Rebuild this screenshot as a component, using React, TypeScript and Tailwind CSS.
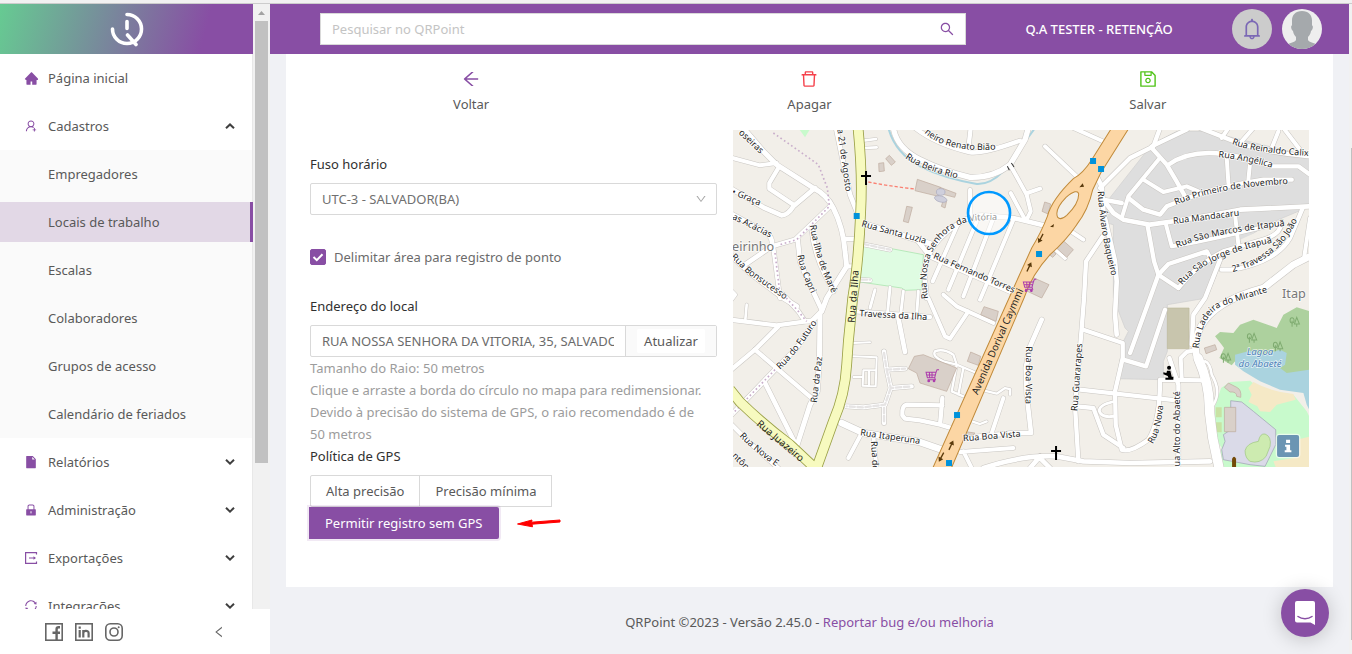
import React, { useState } from "react";
import {
  AiFillFile,
  AiFillHome,
  AiFillLock,
  AiOutlineArrowLeft,
  AiOutlineBell,
  AiOutlineDelete,
  AiOutlineDown,
  AiOutlineLeft,
  AiOutlineSave,
  AiOutlineSearch,
  AiOutlineSync,
  AiOutlineUserAdd,
} from "react-icons/ai";

/* ---------- Map data: three units of the drawing are one pixel ---------- */

type Road = [width: number, d: string];

const roads: Road[] = [
  [15, "M40,0 L100,70 L140,110 L250,180 Q290,200 310,240 Q340,300 345,370 L350,415 L290,510 L275,550 L245,580"],
  [12, "M0,88 L90,112 L140,105"],
  [13, "M145,120 L118,165 L118,182 L190,230"],
  [14, "M0,180 L100,238 L155,262 Q175,260 190,235 L255,180"],
  [14, "M0,255 L110,315 Q130,330 125,355 L45,410"],
  [13, "M125,355 L195,335 L300,235"],
  [13, "M130,360 L150,510"],
  [15, "M0,380 L60,435 L160,510 L200,535"],
  [14, "M203,335 L210,400 L230,450 L275,545"],
  [14, "M245,300 Q250,370 285,440 L310,490"],
  [14, "M318,0 L345,130 L360,200 L380,250"],
  [8, "M400,38 L438,33 M400,60 L440,58"],
  [13, "M345,333 L372,333 M350,415 L368,415"],
  [16, "M395,285 L600,347"],
  [12, "M395,348 L480,365 M390,455 L420,457"],
  [13, "M0,575 L140,592 L245,578"],
  [8, "M50,530 L46,575"],
  [13, "M145,595 L75,665 L0,728"],
  [13, "M75,665 L245,810"],
  [13, "M160,500 L205,550 L225,580 L245,580"],
  [14, "M250,585 L200,660 L135,725 L0,865"],
  [14, "M105,765 L200,955"],
  [15, "M270,560 L268,700 L262,790 L240,830 L200,955"],
  [13, "M0,885 L60,945 L150,1025"],
  [12, "M0,485 L15,500 L0,520"],
  [13, "M378,550 L600,567"],
  [9, "M435,485 L420,540 M480,478 L472,560 M520,490 L512,560 M565,490 L560,560"],
  [14, "M505,570 L525,672"],
  [6, "M370,645 L420,643 M370,685 L440,688 L437,775 L398,773 L400,727 L437,727 M370,747 L398,747 M417,727 V773"],
  [13, "M462,670 L470,725 L525,722 M470,725 L482,780 L545,775 M482,780 L465,830 L400,838 L350,835 M462,835 L462,885"],
  [13, "M637,832 L530,830 Q515,832 517,862 L525,872 L570,877 L630,890 L680,905 M637,810 L630,890"],
  [20, "M335,885 L400,915 L570,942 L650,970"],
  [12, "M395,915 L355,990 M430,925 L440,1025"],
  [13, "M555,0 Q620,50 720,73 Q760,78 870,38 M715,60 L722,0"],
  [16, "M490,0 Q500,60 570,95 Q640,130 720,148 Q790,150 840,110 L885,35 L895,0"],
  [12, "M840,110 L890,200 L902,250 L890,275 M892,195 L930,182 M842,195 L885,275 M720,185 V260"],
  [14, "M590,510 L582,430 Q590,350 680,290 Q720,262 760,262 L850,270 L940,292"],
  [12, "M985,285 L1060,335"],
  [12, "M685,285 L608,460 M740,280 L655,485 M790,270 L700,505 M850,275 L750,515"],
  [14, "M565,340 L600,385 L850,495"],
  [12, "M945,55 L1045,150 M1030,0 L1130,45 M955,345 L1005,390"],
  [14, "M1100,145 L1115,175 L1120,250 L1155,400 L1160,460 L1155,560 L1160,620"],
  [13, "M1118,325 L1068,400 L1062,510 L1055,600 L1035,835 L1045,1000"],
  [13, "M1110,180 L1200,90 L1270,55 L1290,0 M1120,215 L1175,225"],
  [13, "M1410,0 L1500,35 Q1600,75 1740,85"],
  [12, "M1475,30 L1495,0 M1535,40 L1570,0 M1625,60 L1645,10 M1660,0 L1710,65"],
  [13, "M1265,55 L1370,5 M1265,60 L1310,110 Q1340,160 1365,205"],
  [13, "M1315,110 Q1380,65 1480,78 Q1580,95 1625,115 L1705,115 L1740,140"],
  [12, "M1490,90 L1495,165 M1560,105 L1555,155"],
  [13, "M1685,155 L1600,155 Q1500,170 1400,200 L1310,235 L1290,260 L1240,245 L1195,210"],
  [12, "M1285,95 L1195,205 L1175,270 M1240,155 L1300,192 L1370,175 L1405,190"],
  [14, "M1120,215 L1150,255 L1180,275 L1260,290 Q1400,270 1530,245 L1740,235"],
  [12, "M1308,290 L1325,355 Q1400,345 1650,285 M1515,260 L1525,350"],
  [13, "M1345,480 L1285,440 L1315,408 L1430,370 L1438,385"],
  [13, "M1345,480 Q1400,410 1480,370 L1600,335 Q1650,320 1655,285"],
  [13, "M1252,290 L1272,400 L1285,440 L1260,510 L1200,675"],
  [13, "M1475,425 L1510,425 Q1640,400 1680,330 L1718,240 M1470,395 L1425,510 L1390,560 L1385,650"],
  [20, "M1740,385 L1690,410 L1600,480 Q1450,520 1410,600 Q1385,650 1405,700"],
  [28, "M1404,690 Q1440,770 1438,850 L1448,930 L1468,1025"],
  [12, "M1740,270 L1722,390"],
  [13, "M1305,545 L1248,715 L1180,695"],
  [13, "M1060,605 L1178,645 L1178,690 L1155,790 L1157,890 L1175,965 Q1200,975 1255,935 Q1290,880 1290,755 L1420,757"],
  [13, "M1318,690 L1345,770 V1020 M1050,785 L1345,818"],
  [12, "M1355,750 L1352,690 L1370,672 L1400,665"],
  [8, "M1425,700 Q1440,705 1445,740 Q1475,790 1450,830"],
  [14, "M935,575 L900,655 L887,720 L890,800 L903,915 L850,915 L700,930"],
  [12, "M850,960 L690,972 M700,970 L725,1020 M820,810 L785,915"],
  [14, "M760,1020 Q880,980 980,985 L1060,1000 L1200,1005 L1440,1000 M930,985 L900,1020 M930,990 L960,1020"],
  [7, "M750,785 L800,797 L825,780 L840,783 L840,800 M710,875 L750,888 L770,880 M615,670 Q640,660 670,680 L680,710 L640,700 Q605,685 615,670 M680,710 L665,790 L700,805 M700,720 L685,800 M680,710 L740,735"],
  [12, "M595,510 L645,625 L660,632 L715,550 M640,500 L680,535 L790,585"],
  [13, "M1040,835 L1090,840 L1120,920 L1180,960"],
  [9, "M1155,820 Q1105,830 1108,850 Q1115,870 1150,865"],
];

const buildings: string[] = [
  "M446,106 L461,104 L463,129 L447,131Z",
  "M467,92 L478,82 L496,102 L484,112Z",
  "M530,235 L547,238 L535,284 L520,280Z",
  "M562,154 L632,178 L625,205 L555,188Z",
  "M630,178 L678,196 L674,208 L628,196Z",
  "M640,215 L650,218 L645,240 L634,235Z",
  "M944,222 L962,228 L954,258 L936,250Z",
  "M985,325 L1030,365 L1010,388 L968,350Z",
  "M955,355 L978,378 L968,388 L945,370Z",
  "M908,448 L957,470 L935,510 L888,488Z",
  "M553,685 L580,680 L680,720 L650,790 L570,765 L560,735 L535,722Z",
  "M762,536 L805,550 L798,580 L752,560Z",
  "M722,672 L752,685 L745,712 L712,700Z",
  "M700,910 L735,915 L725,925 L700,922Z",
  "M1423,660 L1455,650 L1460,665 L1428,677Z",
  "M1483,838 H1517 V911 H1483Z",
  "M1483,778 L1495,765 L1520,778 Q1535,785 1532,808 L1520,805 Q1520,790 1500,792Z",
];

const streetLabels: [string, string][] = [
  ["oseiras", "M25,16 L140,125"],
  ["• Graça", "M4,198 L120,246"],
  ["as Acácias", "M5,272 L160,348"],
  ["Rua Bonsucesso", "M2,388 L50,435 L200,540"],
  ["Rua Capri", "M203,382 Q208,430 265,540"],
  ["Rua Ilha de Maré", "M240,292 Q255,400 320,525"],
  ["a 21 de Agosto", "M322,4 L352,230"],
  ["Rua Santa Luzia", "M393,295 L640,362"],
  ["Rua Nossa Senhora da Vitória", "M594,512 Q574,390 640,325 Q690,275 760,277 L880,277"],
  ["neiro Renato Bião", "M583,14 Q650,80 830,62"],
  ["Rua Beira Rio", "M525,90 Q580,130 720,160"],
  ["Rua Fernando Torres", "M608,390 L890,512"],
  ["Rua Álvaro Baqueiro", "M1103,190 Q1110,330 1160,500"],
  ["Rua Reinaldo Calixto", "M1505,48 Q1600,85 1860,88"],
  ["Rua Angélica", "M1465,88 Q1550,95 1680,135"],
  ["Rua Primeiro de Novembro", "M1337,231 Q1480,170 1750,165"],
  ["Rua Mandacaru", "M1330,288 L1590,255"],
  ["Rua São Marcos de Itapuã", "M1342,360 Q1450,310 1760,285"],
  ["Rua São Jorge de Itapuã", "M1357,472 Q1430,370 1720,328"],
  ["2ª Travessa São João", "M1508,432 Q1640,400 1700,280 L1740,180"],
  ["Rua Ladeira do Mirante", "M1406,662 Q1415,560 1480,532 L1660,478"],
  ["Travessa da Ilha", "M388,565 L660,580"],
  ["Rua do Futuro", "M150,725 Q200,680 290,540"],
  ["Rua da Paz", "M260,825 L285,620"],
  ["Rua Nova E", "M28,925 Q80,980 220,1070"],
  ["ntôn", "M5,985 L90,1070"],
  ["Rua Itaperuna", "M390,922 L640,958"],
  ["Rua do", "M423,940 L430,1070"],
  ["Rua Boa Vista", "M888,655 L886,880"],
  ["Rua Boa Vista", "M700,940 L920,922"],
  ["Rua Guararapes", "M1042,850 L1060,600"],
  ["Rua Nova", "M1268,948 Q1300,900 1302,780"],
  ["ua Alto do Abaeté", "M1350,1015 L1350,740"],
];

const avenueLabels: [string, string][] = [
  ["Rua da Ilha", "M374,585 L390,380"],
  ["Rua Juazeiro", "M78,890 L260,1044"],
  ["Avenida Dorival Caymmi", "M743,802 L910,420"],
];

const stops: [number, number][] = [
  [380, 264], [1089, 99], [1113, 123], [927, 378], [681, 861], [657, 1005],
];

const trees: [number, number][] = [[1565, 630], [1693, 582], [1643, 656], [1487, 690]];

function Cart({ x, y }: { x: number; y: number }) {
  return (
    <g transform={`translate(${x} ${y})`} stroke="#ac39ac" strokeWidth="3" fill="none">
      <path d="M0,6 H30 L26,22 H4Z M3,14 H29 M10,6 L11,22 M18,6 V22 M30,6 L33,-2 H39 M26,22 L28,28 H5" />
      <circle cx="8" cy="32" r="2.5" fill="#ac39ac" />
      <circle cx="24" cy="32" r="2.5" fill="#ac39ac" />
    </g>
  );
}

function MapArrow({ x, y, angle }: { x: number; y: number; angle: number }) {
  return (
    <path
      transform={`translate(${x} ${y}) rotate(${angle})`}
      d="M-15,-2 H3 V-8 L16,0 L3,8 V2 H-15Z"
      fill="#5a3a0c"
    />
  );
}

function StreetMap() {
  const yellow = "M384,0 Q398,140 392,250 Q386,400 368,510 L355,640 L350,710 Q345,800 310,880 L258,1025 M0,785 L30,822 Q100,890 180,950 L260,1025";
  const avenue =
    "M1148,-5 L1085,95 Q1060,135 1030,152 Q965,215 952,265 Q935,310 905,360 L855,470 L606,1025 L662,1025 L882,510 Q905,440 960,380 Q1010,335 1040,290 Q1075,245 1088,185 L1112,135 L1200,-5Z M983,268 Q972,245 1008,208 Q1042,180 1046,198 Q1046,228 1010,262 Q992,278 983,268Z";
  return (
    <svg viewBox="9 6 1728 1011" className="block h-auto w-full" role="img" aria-label="Mapa do local">
      <rect x="0" y="0" width="1740" height="1025" fill="#f2efe9" />
      <path d="M1265,50 L1340,10 H1430 L1740,85 V235 L1610,290 L1520,350 L1480,390 L1430,510 L1312,530 V670 L1300,700 V755 L1160,752 L1180,640 L1195,610 L1185,600 L1150,510 V290 L1110,280 L1135,215Z" fill="#dedede" stroke="#cfcfcf" strokeWidth="2" />
      <path d="M1530,335 L1650,280 L1740,240 V340 L1560,400Z" fill="#f2efe9" />
      <path d="M205,0 L225,28 L242,0Z" fill="#c8facc" />
      <path d="M395,345 L580,380 L575,485 L525,487 L515,480 L390,462Z" fill="#dffce2" stroke="#9fe3a4" strokeWidth="2" />
      <path d="M1312,540 H1377 V662 H1312Z" fill="#c8c5ad" stroke="#bcb89a" strokeWidth="2" />
      <path d="M1740,550 V735 L1650,735 L1530,720 L1515,700 L1505,712 L1468,690 L1482,660 L1475,650 L1455,625 L1470,612 L1510,615 L1530,590 L1570,575 L1640,600 L1660,560 L1700,538Z" fill="#add19e" />
      <path d="M1515,680 L1560,668 L1600,680 L1650,665 L1670,675 L1665,710 L1650,720 L1670,735 L1740,725 V850 L1730,830 L1720,795 L1650,785 L1590,760 L1540,730 L1515,710Z" fill="#aad3df" />
      <path d="M1473,780 L1500,762 L1560,758 L1600,790 L1690,800 L1730,850 L1740,870 V1025 H1460 L1475,960 L1455,930 L1455,835Z" fill="#c8facc" />
      <path d="M1555,780 L1570,762 Q1620,790 1690,798 L1697,815 L1640,830 L1620,852 L1590,850 L1582,835 L1555,822 L1565,800Z" fill="#f5e9c6" />
      <path d="M1700,935 L1740,925 V1025 H1640 L1630,1000 L1690,990Z" fill="#f5e9c6" />
      <path d="M1502,818 L1535,822 L1570,850 L1637,905 V950 L1605,1015 L1560,1010 L1480,995 L1475,965 L1485,940 L1480,920 L1502,905Z" fill="#dadae8" stroke="#9c9cb0" strokeWidth="2" />
      <path d="M1545,968 Q1550,945 1585,940 Q1590,915 1605,918 Q1625,925 1620,955 L1608,985 Q1590,1008 1560,1000 Q1545,990 1545,968Z" fill="#cdebb0" stroke="#9cc57c" strokeWidth="2" />
      <path d="M1457,838 H1475 V868 H1457Z M1457,883 H1475 V913 H1457Z" fill="#c8e2a4" />
      <g stroke="#7fab70" strokeWidth="3" fill="none">
        {trees.map(([x, y]) => (
          <g key={x} transform={`translate(${x} ${y})`}>
            <path d="M-7,14 V-4 M7,14 V6 M0,6 L7,-14 L15,6Z" />
            <ellipse cx="-7" cy="-5" rx="6" ry="8" />
          </g>
        ))}
      </g>

      <path d="M475,0 Q495,75 570,115 Q640,150 740,168 Q780,170 820,130 L915,0" fill="none" stroke="#aad3df" strokeWidth="6" />

      <g fill="none" strokeLinecap="round" strokeLinejoin="round">
        {roads.map(([w, d], i) => (
          <path key={i} d={d} stroke="#c9c6c2" strokeWidth={w + 3} />
        ))}
        {roads.map(([w, d], i) => (
          <path key={i} d={d} stroke="#ffffff" strokeWidth={w} />
        ))}
        <path d="M462,675 L470,725 L525,722 M470,725 L482,780 L545,775 M482,780 L465,830 L400,838 L350,835 M462,840 V885 M400,348 L480,365 M395,455 H420" stroke="#e6e4e4" strokeWidth="7" strokeDasharray="16 8" />
      </g>

      <g fill="none">
        <path d="M130,15 L230,85 L265,110 L292,180 L298,235 L200,335 L150,350 M135,375 L150,500 M160,500 L205,550 L230,580 M135,725 L0,865" stroke="#c9aecb" strokeWidth="5" strokeDasharray="5 8" />
        <path d="M415,162 Q480,175 555,183" stroke="#fa8072" strokeWidth="4" strokeDasharray="10 6" />
        <path d="M832,115 L838,127 M844,105 L852,117" stroke="#333" strokeWidth="3" />
      </g>

      <g fill="#d9d0c9" stroke="#bda99c" strokeWidth="2">
        {buildings.map((d) => (
          <path key={d} d={d} />
        ))}
      </g>
      <g fill="#cfcfdc" stroke="#a9a9bd" strokeWidth="2">
        <ellipse cx="632" cy="192" rx="13" ry="10" />
        <ellipse cx="632" cy="213" rx="19" ry="9" transform="rotate(15 632 213)" />
      </g>

      <g fill="none" strokeLinejoin="round">
        <path d={yellow} stroke="#9aa046" strokeWidth="32" />
        <path d={yellow} stroke="#f7fabf" strokeWidth="27" />
      </g>
      <path d={avenue} fill="#fcd6a4" fillRule="evenodd" stroke="#c08a3a" strokeWidth="3" />
      <path d="M1048,178 l10,-12 l4,10Z M960,296 l12,-8 l-2,10Z" fill="#5a3a0c" />

      <MapArrow x={932} y={331} angle={118} />
      <MapArrow x={897} y={417} angle={-65} />
      <MapArrow x={663} y={952} angle={-65} />
      <MapArrow x={634} y={987} angle={118} />
      <Cart x={880} y={456} />
      <Cart x={588} y={727} />

      <g fill="none">
        {streetLabels.map(([, d], i) => (
          <path key={i} id={`street-${i}`} d={d} />
        ))}
        {avenueLabels.map(([, d], i) => (
          <path key={i} id={`avenue-${i}`} d={d} />
        ))}
      </g>
      <g className="font-['Noto_Sans'] text-[27px] font-normal" fill="#1f1f1f" stroke="#ffffff" strokeWidth="5" strokeOpacity="0.8" strokeLinejoin="round" paintOrder="stroke">
        {streetLabels.map(([text], i) => (
          <text key={i}>
            <textPath href={`#street-${i}`}>{text}</textPath>
          </text>
        ))}
      </g>
      <g className="font-['Noto_Sans'] text-[30px] font-normal" fill="#1f1f1f">
        {avenueLabels.map(([text], i) => (
          <text key={i}>
            <textPath href={`#avenue-${i}`}>{text}</textPath>
          </text>
        ))}
      </g>
      <g className="font-['Noto_Sans'] text-[38px] font-normal" fill="#777777" stroke="#ffffff" strokeWidth="5" strokeOpacity="0.7" paintOrder="stroke">
        <text x="6" y="368">eirinho</text>
        <text x="1656" y="509">Itap</text>
      </g>
      <g className="font-['Noto_Sans'] text-[29px] font-normal italic" fill="#4a7fb8" stroke="#ffffff" strokeWidth="4" strokeOpacity="0.7" paintOrder="stroke" textAnchor="middle">
        <text x="1590" y="682">Lagoa</text>
        <text x="1590" y="716">do Abaeté</text>
      </g>

      <g fill="#0092da">
        {stops.map(([x, y]) => (
          <rect key={x} x={x - 9} y={y - 9} width="18" height="18" />
        ))}
      </g>
      <path d="M408,129 V171 M393,144 H423 M978,954 V996 M963,969 H993" stroke="#000" strokeWidth="6" fill="none" />
      <g fill="#000">
        <circle cx="1317" cy="719" r="6" />
        <path d="M1311,728 H1321 L1325,746 H1330 V755 H1306 V749 H1315 L1313,744 L1300,739 V733 L1309,735Z" />
      </g>
      <path d="M1506,1017 V992 Q1512,980 1518,992 V1017Z" fill="#734a08" />

      <circle cx="777" cy="255" r="63" fill="#ffffff" fillOpacity="0.5" stroke="#0099ff" strokeWidth="8" />

      <g>
        <rect x="1637" y="917" width="74" height="74" rx="12" fill="#ffffff" fillOpacity="0.6" />
        <rect x="1641" y="921" width="66" height="66" rx="6" fill="#6b95b3" />
        <path d="M1668,935 H1680 V945 H1668Z M1665,950 H1680 V967 H1684 V973 H1664 V967 H1669 V956 H1665Z" fill="#ffffff" />
      </g>
    </svg>
  );
}

/* ---------- Icons ---------- */

function Logo() {
  return (
    <svg viewBox="0 0 34 36" className="h-9 w-[34px]" fill="none" stroke="#fff" strokeWidth="3.6" strokeLinecap="round">
      <path d="M17 3.500a14.500 14.500 0 1 1-14.500 14.500M17 10.500v7M17.500 24l8.500 9.500" />
    </svg>
  );
}

function ExportIcon() {
  return (
    <svg viewBox="0 0 14 14" className="size-[14px]" fill="none" stroke="currentColor" strokeWidth="1.200">
      <path d="M12.500 3.500V1.600H1.600V12.400H12.500V10.500M5 7H11" />
      <path d="M9.500 5.200L12 7L9.500 8.800Z" fill="currentColor" stroke="none" />
    </svg>
  );
}

function FacebookIcon() {
  return (
    <svg viewBox="0 0 18 18" className="size-[18px]" fill="none" stroke="currentColor">
      <rect x="0.800" y="0.800" width="16.400" height="16.400" strokeWidth="1.600" />
      <path d="M15 4.300h-1.500c-1.300 0-1.900.7-1.900 2V17M7.500 9.800H15" strokeWidth="2.400" />
    </svg>
  );
}

function LinkedinIcon() {
  return (
    <svg viewBox="0 0 18 18" className="size-[18px]" fill="none" stroke="currentColor">
      <rect x="0.800" y="0.800" width="16.400" height="16.400" strokeWidth="1.600" />
      <path d="M4.700 7v7.500M4.700 3.500v2.200M8.300 14.500V7M8.300 10c0-2.800 5.300-3 5.300 0v4.500" strokeWidth="2.200" />
    </svg>
  );
}

function InstagramIcon() {
  return (
    <svg viewBox="0 0 18 18" className="size-[18px]" fill="none" stroke="currentColor" strokeWidth="1.600">
      <rect x="0.800" y="0.800" width="16.400" height="16.400" rx="4.500" />
      <circle cx="9" cy="9" r="4" />
      <circle cx="13.700" cy="4.300" r="1" fill="currentColor" stroke="none" />
    </svg>
  );
}

function Caret({ open }: { open?: boolean }) {
  return (
    <svg viewBox="0 0 10 6" className="h-[6px] w-[10px]" fill="none" stroke="#3f3f3f" strokeWidth="2">
      <path d={open ? "M1 5.200L5 1.400L9 5.200" : "M1 0.800L5 4.600L9 0.800"} />
    </svg>
  );
}

function Avatar() {
  return (
    <svg viewBox="0 0 40 40" className="size-10 rounded-full bg-[#eeeeee]">
      <path d="M20 2c6.500 0 10 4 10 9.500v5c1.500 0 1 4.500-1 5.500-.5 3-1.500 4.500-3 6v3c1 2.500 6 2.500 9.500 5L30 42H10l-5.500-6c3.500-2.500 8.500-2.500 9.500-5v-3c-1.500-1.500-2.500-3-3-6-2-1-2.500-5.500-1-5.500v-5C10 6 13.500 2 20 2z" fill="#a5a9ac" />
    </svg>
  );
}

/* ---------- Sidebar ---------- */

function MenuRow({ icon, label, open, group = true }: { icon: React.ReactNode; label: string; open?: boolean; group?: boolean }) {
  return (
    <li className="h-12 py-1">
      <a href="#" className="flex h-full items-center pr-[17px] pl-6">
        <span className="flex w-6 text-[14px] text-[#884ea4]">{icon}</span>
        <span className="flex-1">{label}</span>
        {group && <Caret open={open} />}
      </a>
    </li>
  );
}

const cadastros = ["Empregadores", "Locais de trabalho", "Escalas", "Colaboradores", "Grupos de acesso", "Calendário de feriados"];

function Sidebar() {
  return (
    <aside className="flex w-[270px] shrink-0 flex-col bg-white">
      <div className="flex min-h-0 flex-1">
        <div className="flex min-w-0 flex-1 flex-col overflow-hidden">
          <div className="flex h-[50px] shrink-0 items-center justify-center bg-linear-[105deg,#66cb92_0%,#884ea4_80%]">
            <Logo />
          </div>
          <nav className="border-r border-[#e8e8e8]">
            <ul>
              <MenuRow icon={<AiFillHome className="size-[15px]" />} label="Página inicial" group={false} />
              <MenuRow icon={<AiOutlineUserAdd />} label="Cadastros" open />
            </ul>
            <ul className="bg-[#fafafa]">
              {cadastros.map((name) => (
                <li key={name} className="-mr-px h-12 py-1">
                  <a
                    href="#"
                    className={
                      name === "Locais de trabalho"
                        ? "flex h-full items-center border-r-3 border-[#884ea4] bg-[#e2d8e6] pl-12"
                        : "flex h-full items-center pl-12"
                    }
                  >
                    {name}
                  </a>
                </li>
              ))}
            </ul>
            <ul>
              <MenuRow icon={<AiFillFile />} label="Relatórios" />
              <MenuRow icon={<AiFillLock />} label="Administração" />
              <MenuRow icon={<ExportIcon />} label="Exportações" />
              <MenuRow icon={<AiOutlineSync />} label="Integrações" />
            </ul>
          </nav>
        </div>
        <div className="flex w-[17px] shrink-0 flex-col items-center bg-[#f1f1f1]">
          <svg viewBox="0 0 17 17" className="size-[17px]">
            <path d="M5 11L8.500 7L12 11Z" fill="#a3a3a3" />
          </svg>
          <div className="h-3/4 max-h-[442px] w-[13px] bg-[#c1c1c1]" />
        </div>
      </div>
      <div className="flex h-[45px] shrink-0 items-center gap-3 pr-11 pl-[45px] text-[#666]">
        <a href="#" aria-label="Facebook"><FacebookIcon /></a>
        <a href="#" aria-label="LinkedIn"><LinkedinIcon /></a>
        <a href="#" aria-label="Instagram"><InstagramIcon /></a>
        <button type="button" aria-label="Recolher menu" className="ml-auto text-[14px]"><AiOutlineLeft /></button>
      </div>
    </aside>
  );
}

/* ---------- Page ---------- */

function Action({ icon, label }: { icon: React.ReactNode; label: string }) {
  return (
    <div className="flex flex-1 justify-center">
      <button type="button" className="flex flex-col items-center">
        <span className="flex h-[22px] items-center text-[20px]">{icon}</span>
        <span className="mt-[3px] leading-[22px]">{label}</span>
      </button>
    </div>
  );
}

export default function App() {
  const [address, setAddress] = useState("RUA NOSSA SENHORA DA VITORIA, 35, SALVADOR - BA");
  const [limited, setLimited] = useState(true);
  return (
    <div className="flex h-screen flex-col overflow-hidden bg-[#f0f1f5] font-['Noto_Sans','Open_Sans',sans-serif] text-[13px] leading-[22px] font-normal text-[#595959]">
      <div className="h-1 shrink-0 border-b border-[#cccccc] bg-[#f1f1f1]" />
      <div className="flex min-h-0 flex-1">
        <Sidebar />
        <div className="flex min-w-0 flex-1 flex-col">
          <header className="flex h-[50px] shrink-0 items-center bg-[#884ea4] pr-[27px] pl-[50px]">
            <label className="flex h-8 w-[64.5%] items-center border border-[#d9d9d9] bg-white pr-[10px] pl-[11px]">
              <input type="search" aria-label="Pesquisar" placeholder="Pesquisar no QRPoint" className="min-w-0 flex-1 outline-none placeholder:text-[#c4c4c4]" />
              <AiOutlineSearch className="size-4 text-[#884ea4]" />
            </label>
            <span className="flex-1 text-center font-medium text-white">Q.A TESTER - RETENÇÃO</span>
            <button type="button" aria-label="Notificações" className="mr-[10px] flex size-10 items-center justify-center rounded-full bg-[#cccccc] text-[#7b68b5]">
              <AiOutlineBell className="size-6" />
            </button>
            <Avatar />
          </header>

          <main className="mx-4 bg-white px-6 pt-[14px] pb-12">
            <div className="-mx-2 flex">
              <Action icon={<AiOutlineArrowLeft className="text-[#884ea4]" />} label="Voltar" />
              <Action icon={<AiOutlineDelete className="text-[#f5414b]" />} label="Apagar" />
              <Action icon={<AiOutlineSave className="text-[#52c41a]" />} label="Salvar" />
            </div>

            <div className="-mx-2 mt-[15px] flex items-start">
              <form className="w-5/12 px-2 pt-[23px]" onSubmit={(e) => e.preventDefault()}>
                <label htmlFor="timezone" className="block text-[#303030]">Fuso horário</label>
                <div className="relative mt-2">
                  <select id="timezone" className="h-8 w-full appearance-none rounded-xs border border-[#d9d9d9] bg-white px-[11px] text-[#707070]">
                    <option>UTC-3 - SALVADOR(BA)</option>
                  </select>
                  <AiOutlineDown className="pointer-events-none absolute top-[10px] right-[10px] size-3 text-[#a6a6a6]" />
                </div>

                <label className="mt-[31px] flex items-center gap-2 text-[#6b6b6b]">
                  <span className="relative flex size-4">
                    <input type="checkbox" checked={limited} onChange={(e) => setLimited(e.target.checked)} className="peer size-4 appearance-none rounded-xs border border-[#884ea4] bg-white checked:bg-[#884ea4]" />
                    <svg viewBox="0 0 16 16" className="pointer-events-none absolute inset-0 hidden size-4 peer-checked:block" fill="none" stroke="#fff" strokeWidth="2">
                      <path d="M3.500 8L6.800 11.200L12.500 5.200" />
                    </svg>
                  </span>
                  Delimitar área para registro de ponto
                </label>

                <label htmlFor="address" className="mt-[27px] block text-[#303030]">Endereço do local</label>
                <div className="mt-2 flex h-8 rounded-xs border border-[#d9d9d9]">
                  <div className="min-w-0 flex-1 px-[11px]">
                    <input id="address" value={address} onChange={(e) => setAddress(e.target.value)} className="h-full w-full text-[#6b6b6b] outline-none" />
                  </div>
                  <div className="flex items-center border-l border-[#d9d9d9] bg-[#fafafa] px-[11px]">
                    <button type="button" className="h-6 rounded-xs bg-white px-[7px]">Atualizar</button>
                  </div>
                </div>

                <p className="text-[#9c9c9c]">Tamanho do Raio: 50 metros</p>
                <p className="text-[#9c9c9c]">
                  Clique e arraste a borda do círculo no mapa para redimensionar. Devido à precisão do sistema de GPS, o raio recomendado é de{" "}
                  <span className="whitespace-nowrap">50 metros</span>
                </p>

                <fieldset>
                  <legend className="mb-2 text-[#303030]">Política de GPS</legend>
                  <div className="flex">
                    <button type="button" className="h-8 rounded-l-xs border border-[#d9d9d9] px-[15px]">Alta precisão</button>
                    <button type="button" className="-ml-px h-8 border border-[#d9d9d9] px-[15px]">Precisão mínima</button>
                  </div>
                  <div className="-ml-px flex items-center gap-[18px]">
                    <button type="button" className="h-8 rounded-r-xs bg-[#884ea4] px-4 text-white ring-2 ring-[#884ea4]/12">Permitir registro sem GPS</button>
                    <svg viewBox="0 0 44 12" className="h-3 w-11" aria-hidden="true">
                      <path d="M0.500 7L15 3L14.500 5.200L43 3V5L15 7.200L15.500 9.800Z" fill="#ff0000" stroke="#ff0000" strokeLinejoin="round" />
                    </svg>
                  </div>
                </fieldset>
              </form>
              <div className="w-7/12 px-2">
                <StreetMap />
              </div>
            </div>
          </main>

          <footer className="py-6 text-center">
            QRPoint ©2023 - Versão 2.45.0 -{" "}
            <a href="#" className="text-[#884ea4]">Reportar bug e/ou melhoria</a>
          </footer>
        </div>
        <div className="w-[3px] shrink-0 bg-[#f1f1f1] pt-36 pb-[14px] pl-[2px]">
          <div className="h-full bg-[#c1c1c1]" />
        </div>
      </div>

      <button type="button" aria-label="Abrir chat" className="fixed right-[23px] bottom-[17px] flex size-12 items-center justify-center rounded-full bg-[#884ea4] shadow-[0_2px_20px_rgba(0,0,0,0.2)]">
        <svg viewBox="0 0 24 26" className="h-[26px] w-6">
          <path d="M4 1h16a2 2 0 0 1 2 2v22l-4.500-2.500H4a2 2 0 0 1-2-2V3a2 2 0 0 1 2-2z" fill="#fff" />
          <path d="M5 16.500c4 3 10 3 14 0" fill="none" stroke="#884ea4" strokeWidth="1.500" strokeLinecap="round" />
        </svg>
      </button>
    </div>
  );
}
